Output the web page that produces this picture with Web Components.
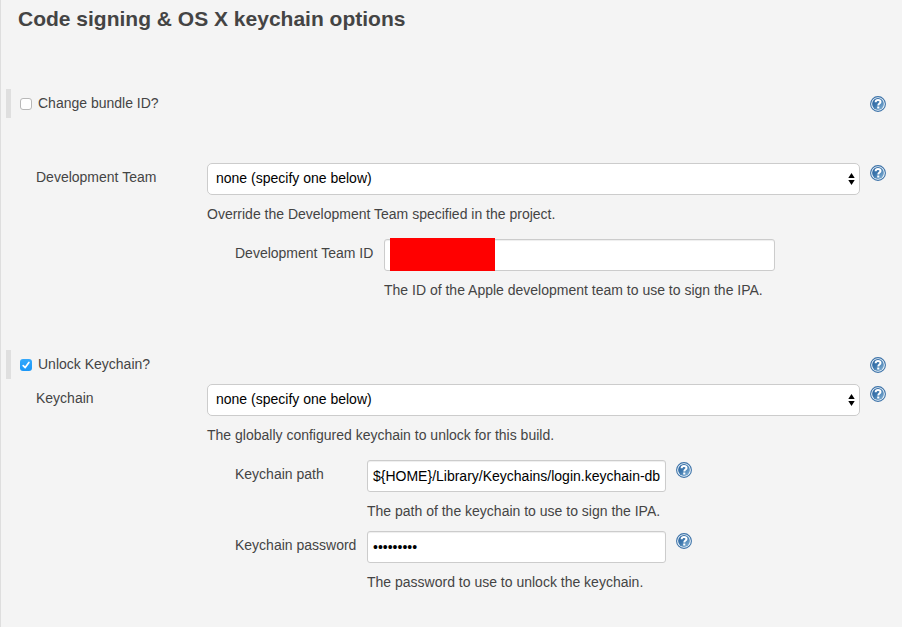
<!DOCTYPE html>
<html lang="en">
<head>
<meta charset="utf-8">
<title>Code signing &amp; OS X keychain options</title>
<style>
html, body { margin: 0; height: 100%; }
body { background: #f4f4f4; overflow: hidden; font: 14px/20px "Liberation Sans", Arial, sans-serif; color: #444; }
</style>
</head>
<body>
<config-section>
  <span slot="title">Code signing &amp; OS X keychain options</span>
  <check-row style="margin-top:50px">Change bundle ID?</check-row>
  <field-row style="margin-top:45px;--left:36px;--label:171px;--control:653px">
    <span slot="label">Development Team</span>
    <select-box>none (specify one below)</select-box>
    <help-icon slot="help"></help-icon>
    <span slot="desc">Override the Development Team specified in the project.</span>
  </field-row>
  <field-row style="margin-top:15px;--left:235px;--label:149px;--control:391px">
    <span slot="label">Development Team ID</span>
    <text-box redacted></text-box>
    <span slot="desc">The ID of the Apple development team to use to sign the IPA.</span>
  </field-row>
  <check-row checked style="margin-top:50px">Unlock Keychain?</check-row>
  <field-row style="margin-top:5px;--left:36px;--label:171px;--control:653px">
    <span slot="label">Keychain</span>
    <select-box>none (specify one below)</select-box>
    <help-icon slot="help"></help-icon>
    <span slot="desc">The globally configured keychain to unlock for this build.</span>
  </field-row>
  <field-row style="margin-top:15px;--left:235px;--label:132px;--control:299px">
    <span slot="label">Keychain path</span>
    <text-box>${HOME}/Library/Keychains/login.keychain-db</text-box>
    <help-icon slot="help"></help-icon>
    <span slot="desc">The path of the keychain to use to sign the IPA.</span>
  </field-row>
  <field-row style="margin-top:10px;--left:235px;--label:132px;--control:299px">
    <span slot="label">Keychain password</span>
    <text-box password>•••••••••</text-box>
    <help-icon slot="help"></help-icon>
    <span slot="desc">The password to use to unlock the keychain.</span>
  </field-row>
</config-section>
<script>
const define = (name, html) => customElements.define(name, class extends HTMLElement {
  constructor() {
    super();
    const t = document.createElement('template');
    t.innerHTML = html;
    this.attachShadow({ mode: 'open' }).append(t.content.cloneNode(true));
  }
});

define('config-section', `
<style>
:host { display: flex; flex-direction: column; box-sizing: border-box; height: 627px; border-left: 1px solid #dedede; }
h2 { margin: 7px 0 0 17px; height: 32px; font-size: 21px; line-height: 24px; font-weight: bold; white-space: nowrap; }
</style>
<h2><slot name="title"></slot></h2>
<slot></slot>`);

define('check-row', `
<style>
:host { display: flex; align-items: center; box-sizing: border-box; height: 29px; flex: none; margin-left: 5px; padding: 0 16px 0 9px; border-left: 5px solid #dfdfdf; }
i { width: 12px; height: 12px; box-sizing: border-box; margin-top: 1px; border: 1px solid #b8b8b8; border-radius: 3px; background: #fff; }
svg { display: none; }
:host([checked]) i { border: 0; background: linear-gradient(#35a9fb, #1a97f8); }
:host([checked]) svg { display: block; }
.t { margin-left: 6px; flex: 1; padding-bottom: 2px; }
help-icon { margin-top: 1px; }
</style>
<i><svg width="12" height="12" viewBox="0 0 12 12" fill="none" stroke="#fff" stroke-width="1.7" stroke-linecap="round" stroke-linejoin="round"><path d="M3.2 6.6 5.2 8.6 8.9 3.4"/></svg></i>
<span class="t"><slot></slot></span><help-icon></help-icon>`);

define('field-row', `
<style>
:host { display: grid; flex: none; grid-template-columns: var(--label) var(--control) 26px; grid-template-rows: 32px 20px; row-gap: 9px; margin-left: calc(var(--left) - 1px); white-space: nowrap; }
.l { padding-top: 4px; }
.h { padding: 2px 0 0 10px; }
.d { grid-column: 2; }
</style>
<div class="l"><slot name="label"></slot></div><div><slot></slot></div><div class="h"><slot name="help"></slot></div>
<div class="d"><slot name="desc"></slot></div>`);

define('select-box', `
<style>
:host { display: flex; align-items: center; justify-content: space-between; box-sizing: border-box; height: 32px; padding: 0 4px 2px 8px; border: 1px solid #ccc; border-radius: 5px; background: #fff; color: #000; }
svg { display: block; margin-top: 2px; }
</style>
<span><slot></slot></span>
<svg width="7" height="14" viewBox="0 0 7 14"><path d="M3.5 1 6.7 6H.3zM3.5 13 .3 8h6.4z" fill="#000"/></svg>`);

define('text-box', `
<style>
:host { display: flex; align-items: center; position: relative; box-sizing: border-box; height: 32px; padding: 0 5px; border: 1px solid #ccc; border-radius: 3px; background: #fff; color: #000; box-shadow: inset 0 1px 1px rgba(0,0,0,.07); }
b { display: none; position: absolute; left: 5px; top: -2px; width: 105px; height: 33px; background: #f00; }
:host([redacted]) b { display: block; }
</style>
<span><slot></slot></span><b></b>`);

define('help-icon', `
<style>:host { display: block; width: 16px; height: 16px; } svg { display: block; }</style>
<svg width="16" height="16" viewBox="0 0 16 16">
<defs><linearGradient id="g" x1="0" y1="0" x2="1" y2="1"><stop offset="0" stop-color="#28619d"/><stop offset=".45" stop-color="#3e78ae"/><stop offset="1" stop-color="#8fbbdc"/></linearGradient></defs>
<circle cx="8" cy="8" r="7.4" fill="#f5fafd" stroke="#3c72a8" stroke-width="1.1"/>
<circle cx="8" cy="8" r="5.9" fill="url(#g)"/>
<path d="M5.600 6.200C5.700 4.400 6.800 3.900 8 3.900c1.400 0 2.500.8 2.500 2.100C10.500 7.600 8.300 7.600 8.300 9.500" fill="none" stroke="#fff" stroke-width="2"/>
<rect x="7.200" y="10.500" width="2.100" height="2" fill="#fff"/>
</svg>`);
</script>
</body>
</html>
